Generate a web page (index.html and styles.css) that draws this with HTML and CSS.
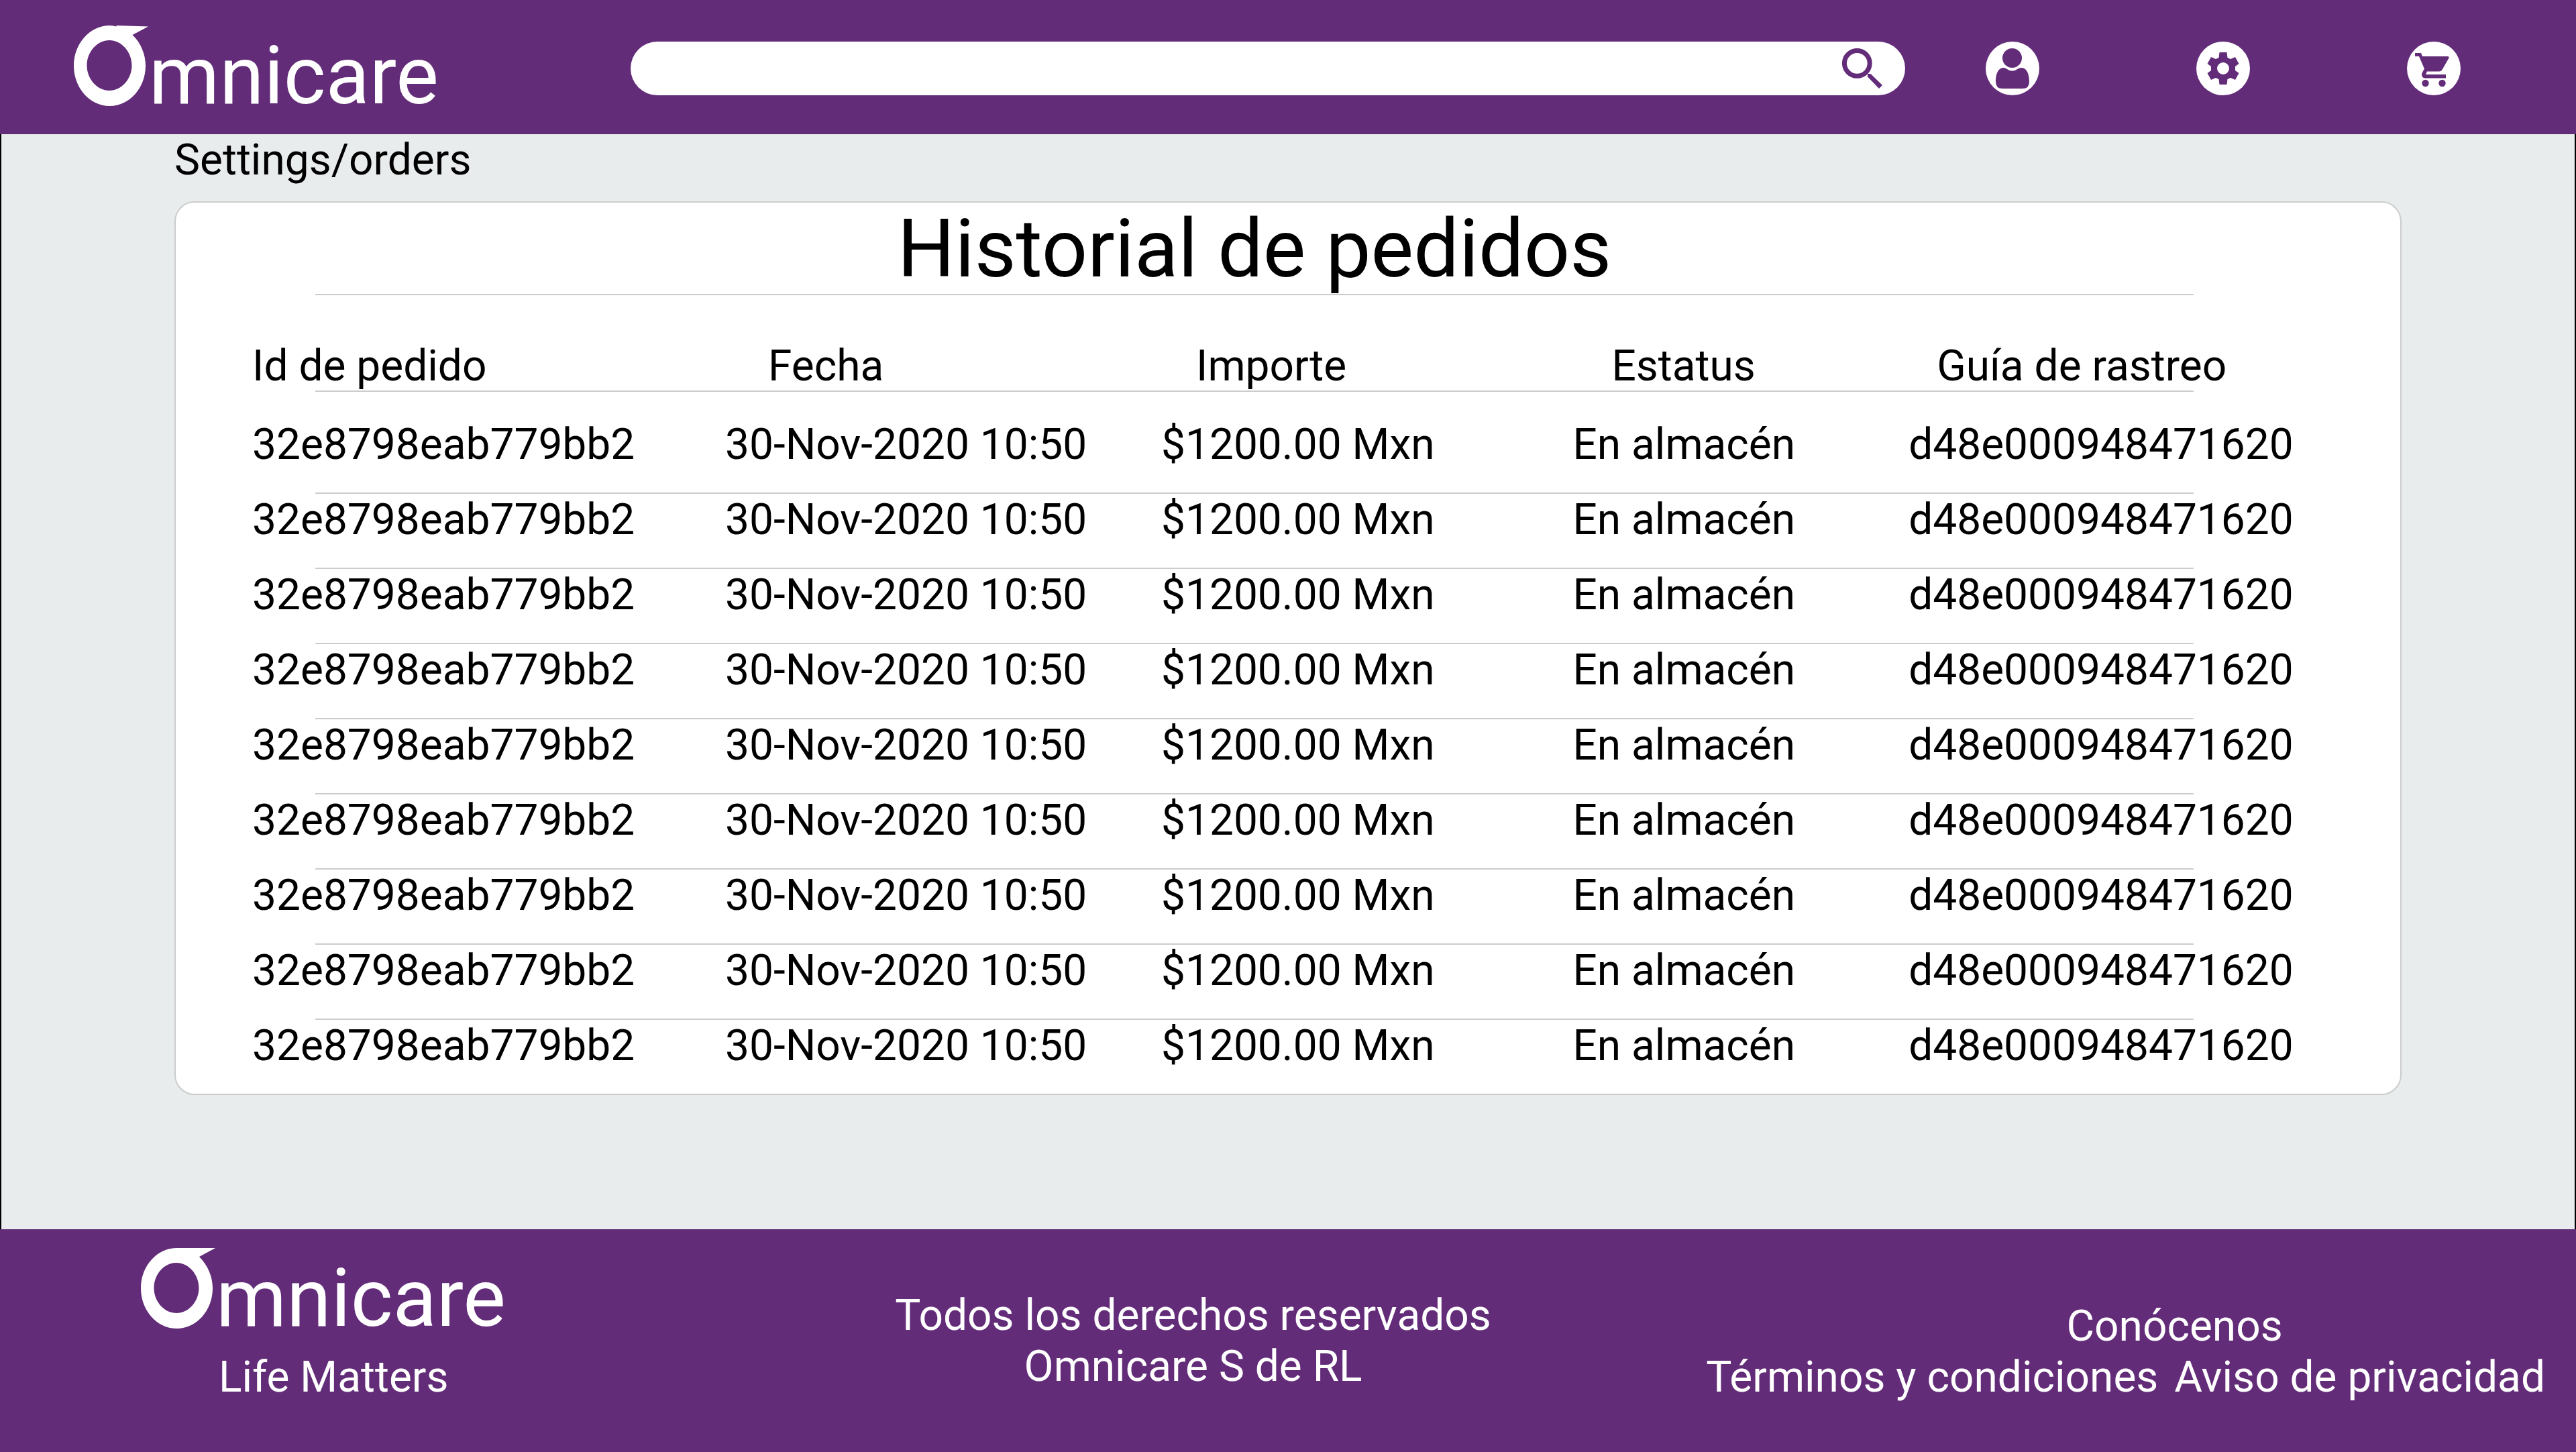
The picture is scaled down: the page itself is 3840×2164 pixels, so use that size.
FILE: index.html
```html
<!DOCTYPE html>
<html lang="es">
<head>
<meta charset="utf-8">
<meta name="viewport" content="width=device-width, initial-scale=1">
<title>Omnicare - Historial de pedidos</title>
<link rel="stylesheet" href="styles.css">
</head>
<body>
<header class="topbar">
  <a class="logo" href="#" aria-label="Omnicare">
    <svg class="logo-mark" viewBox="0 0 112 120" aria-hidden="true"><path fill-rule="evenodd" d="M53.500 0Q59 0 63.500 1.500V0L111 1.500L87.500 14C100 26 107 43 107 60C107 93 83 120 53.500 120S0 93 0 60S24 0 53.500 0ZM53 22C35 22 19.500 39 19.500 59.500S35 97 53 97S86.500 80 86.500 59.500S71 22 53 22Z"/></svg>
    <span class="logo-text">mnicare</span>
  </a>
  <form class="search" role="search">
    <input class="search-input" type="search" aria-label="Buscar">
    <button class="search-button" type="button" aria-label="Buscar">
      <svg class="search-icon" viewBox="0 0 60 60" aria-hidden="true"><circle cx="22.300" cy="22.300" r="18.900" fill="none" stroke="currentColor" stroke-width="7"/><path fill="currentColor" d="M38 42.500V38H42.500L60 55L55 60Z"/></svg>
    </button>
  </form>
  <nav class="actions" aria-label="Cuenta">
    <a class="action" href="#" aria-label="Perfil"><svg class="action-icon" viewBox="0 0 80 80" aria-hidden="true"><circle cx="39.500" cy="24.500" r="14.500"/><path d="M27 39Q29 39 31 40.500Q40 47 48 40.500Q50 39 53 39C62 39 65 50 65 60Q65 70 55 70H25Q15 70 15 60C15 49 18 39 27 39Z"/></svg></a>
    <a class="action" href="#" aria-label="Ajustes"><svg class="action-icon" viewBox="0 0 80 80" aria-hidden="true"><path fill-rule="evenodd" d="M34.500 16H45.500L46.500 24L51 26L58 23L63.500 33L58 37V43L63.500 47L58 57L51 54L46.500 56L45.500 64H34.500L33.500 56L29 54L22 57L16.500 47L22 43V37L16.500 33L22 23L29 26L33.500 24ZM40 31A9 9 0 1 0 40 49A9 9 0 1 0 40 31Z"/></svg></a>
    <a class="action" href="#" aria-label="Carrito"><svg class="action-icon" viewBox="0 0 80 80" aria-hidden="true"><path d="M12 17H21L23 22H61Q63 22 62.500 24.500L53 41Q51 44.500 48 44.500H30L28 49H58V54.500H28Q22 54.500 22 49Q22 47 26 40.500L18 22H12Z"/><circle cx="27.500" cy="62" r="5.200"/><circle cx="52.500" cy="62" r="5.200"/></svg></a>
  </nav>
</header>
<main class="content">
  <nav class="breadcrumb" aria-label="Ruta">Settings/orders</nav>
  <section class="card">
    <h1 class="card-title">Historial de pedidos</h1>
    <table class="orders">
      <colgroup><col class="col-id"><col class="col-date"><col class="col-amount"><col class="col-status"><col></colgroup>
      <thead>
        <tr><th scope="col">Id de pedido</th><th scope="col" class="head-date">Fecha</th><th scope="col" class="head-amount">Importe</th><th scope="col" class="head-status">Estatus</th><th scope="col" class="head-tracking">Guía de rastreo</th></tr>
      </thead>
      <tbody>
        <tr><td>32e8798eab779bb2</td><td>30-Nov-2020 10:50</td><td>$1200.00 Mxn</td><td>En almacén</td><td>d48e000948471620</td></tr>
        <tr><td>32e8798eab779bb2</td><td>30-Nov-2020 10:50</td><td>$1200.00 Mxn</td><td>En almacén</td><td>d48e000948471620</td></tr>
        <tr><td>32e8798eab779bb2</td><td>30-Nov-2020 10:50</td><td>$1200.00 Mxn</td><td>En almacén</td><td>d48e000948471620</td></tr>
        <tr><td>32e8798eab779bb2</td><td>30-Nov-2020 10:50</td><td>$1200.00 Mxn</td><td>En almacén</td><td>d48e000948471620</td></tr>
        <tr><td>32e8798eab779bb2</td><td>30-Nov-2020 10:50</td><td>$1200.00 Mxn</td><td>En almacén</td><td>d48e000948471620</td></tr>
        <tr><td>32e8798eab779bb2</td><td>30-Nov-2020 10:50</td><td>$1200.00 Mxn</td><td>En almacén</td><td>d48e000948471620</td></tr>
        <tr><td>32e8798eab779bb2</td><td>30-Nov-2020 10:50</td><td>$1200.00 Mxn</td><td>En almacén</td><td>d48e000948471620</td></tr>
        <tr><td>32e8798eab779bb2</td><td>30-Nov-2020 10:50</td><td>$1200.00 Mxn</td><td>En almacén</td><td>d48e000948471620</td></tr>
        <tr><td>32e8798eab779bb2</td><td>30-Nov-2020 10:50</td><td>$1200.00 Mxn</td><td>En almacén</td><td>d48e000948471620</td></tr>
      </tbody>
    </table>
  </section>
</main>
<footer class="footer">
  <div class="brand">
    <a class="logo" href="#" aria-label="Omnicare">
      <svg class="logo-mark" viewBox="0 0 112 120" aria-hidden="true"><path fill-rule="evenodd" d="M53.500 0L111 0L87 13C100 26 107 43 107 60C107 93 83 120 53.500 120S0 93 0 60S24 0 53.500 0ZM53 22C35 22 19.500 39 19.500 59.500S35 97 53 97S86.500 80 86.500 59.500S71 22 53 22Z"/></svg>
      <span class="logo-text">mnicare</span>
    </a>
    <p class="tagline">Life Matters</p>
  </div>
  <p class="rights">Todos los derechos reservados<br>Omnicare S de RL</p>
  <nav class="links" aria-label="Legal">
    <a class="link link-about" href="#">Conócenos</a>
    <a class="link" href="#">Términos y condiciones</a>
    <a class="link" href="#">Aviso de privacidad</a>
  </nav>
</footer>
</body>
</html>
```
FILE: styles.css
```css
* { box-sizing: border-box; }

body {
  display: flex;
  flex-direction: column;
  min-height: 100vh;
  margin: 0;
  font: 64px/77px Roboto, sans-serif;
  color: #000;
  background: #e8eced;
}

h1, p { margin: 0; }
a { color: inherit; text-decoration: none; }

/* Header */
.topbar {
  display: flex;
  align-items: flex-start;
  height: 200px;
  padding: 38px 172px 0 110px;
  color: #632c79;
  background: #632c79;
}

.logo {
  display: flex;
  flex: none;
  width: 550px;
  color: #fff;
}

.logo-mark {
  flex: none;
  width: 112px;
  height: 120px;
  fill: #fff;
}

.logo-text {
  font-size: 120px;
  line-height: 150px;
}

.search {
  display: flex;
  flex: 1;
  height: 80px;
  margin: 24px 120px 0 280px;
  padding-right: 34px;
  border-radius: 40px;
  background: #fff;
}

.search-input {
  flex: 1;
  min-width: 0;
  padding: 0 40px;
  border: 0;
  outline: 0;
  font: inherit;
  background: transparent;
}

.search-button {
  padding: 10px 0;
  border: 0;
  color: inherit;
  background: transparent;
}

.search-icon {
  display: block;
  width: 60px;
  height: 60px;
}

.actions {
  display: flex;
  gap: 234px;
  margin-top: 24px;
}

.action {
  width: 80px;
  height: 80px;
  border-radius: 50%;
  background: #fff;
}

.action-icon {
  display: block;
  fill: #632c79;
}

/* Order history */
.content {
  flex: 1;
  padding: 0 258px 200px;
  border: solid #000;
  border-width: 0 2px;
}

.card {
  margin-top: 23px;
  border: 2px solid #ccc;
  border-radius: 30px;
  background: #fff;
}

.card-title {
  height: 138px;
  margin: 0 308px 0 208px;
  border-bottom: 2px solid #ccc;
  font-size: 120px;
  font-weight: 400;
  line-height: 138px;
  text-align: center;
}

.orders {
  width: 100%;
  border-collapse: collapse;
  table-layout: fixed;
}

.col-id { width: 24.7%; }
.col-date { width: 19.6%; }
.col-amount { width: 18.5%; }
.col-status { width: 15.1%; }

.orders th,
.orders td {
  padding: 0 0 35px;
  font-weight: 400;
  text-align: left;
  white-space: nowrap;
}

.orders th { padding: 67px 0 0; }
.orders .head-date { padding-left: 64px; }
.orders .head-amount { padding-left: 52px; }
.orders .head-status { padding-left: 58px; }
.orders .head-tracking { padding-left: 42px; }
.orders th:first-child,
.orders td:first-child { padding-left: 114px; }
.orders tbody tr:first-child td { padding-top: 40px; }
.orders tbody tr:last-child td { padding-bottom: 33px; }

/* Rules stop short of the card edges while the text runs past them */
.orders tr {
  background: linear-gradient(#ccc, #ccc) 208px 100% / calc(100% - 516px) 2px no-repeat;
}

.orders tbody tr:last-child { background: none; }

/* Footer */
.footer {
  display: flex;
  align-items: flex-start;
  justify-content: space-between;
  min-height: 332px;
  padding: 28px 46px 40px 210px;
  line-height: 76px;
  color: #fff;
  background: #632c79;
}

.tagline {
  margin-top: 5px;
  padding-left: 116px;
}

.brand .logo { height: 150px; }

.rights {
  margin: 63px 0 0 254px;
  text-align: center;
}

.links {
  display: grid;
  grid-template-columns: auto auto;
  column-gap: 24px;
  margin-top: 79px;
}

.link-about {
  grid-column: 1 / -1;
  padding-left: 146px;
  justify-self: center;
}
```
